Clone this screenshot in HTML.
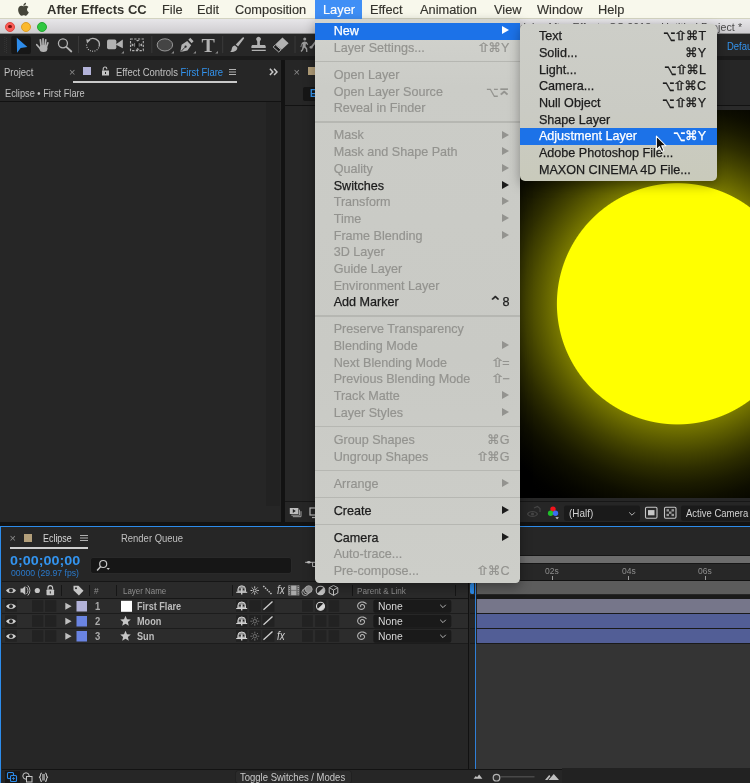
<!DOCTYPE html>
<html lang="en"><head><meta charset="utf-8"><title>After Effects CC - Layer menu</title>
<style>
*{box-sizing:border-box;margin:0;padding:0}
html,body{width:750px;height:783px;overflow:hidden;background:#121212}
body{position:relative;will-change:transform;font-family:"Liberation Sans","DejaVu Sans",sans-serif;font-size:11px;color:#b4b4b4;-webkit-font-smoothing:antialiased}
.a{position:absolute}
i{font-style:normal}
.t{position:absolute;white-space:nowrap;line-height:14px;height:14px;transform-origin:0 50%;transform:scaleX(.86);color:#c0c0c0;font-size:11px}
.bl{color:#3394ef}
#menubar{left:0;top:0;width:750px;height:19.3px;background:#f8f8ec;border-bottom:1px solid #d3d3c0}
#menubar span{position:absolute;top:0;line-height:19.3px;font-size:12.8px;color:#34332d;white-space:nowrap;-webkit-text-stroke:.15px currentColor}
#titlebar{left:0;top:19.3px;width:750px;height:14.6px;background:linear-gradient(#e7e6e9,#cfcdd0);border-bottom:.6px solid #8c8c8c}
.tl{position:absolute;width:10px;height:10px;border-radius:50%;top:2.3px}
#toolbar{left:0;top:33.9px;width:750px;height:21.8px;background:#272727}
.vs{position:absolute;top:3px;width:1px;height:16px;background:#1c1c1c}
.panel{position:absolute;background:#262626}
.menu{position:absolute;background:linear-gradient(#d2d3ce 0,#cbccc7 12%,#c9cac5 60%,#cdcec9 100%);font-size:12.6px;color:#1c1c1c;-webkit-text-stroke:.25px currentColor;box-shadow:0 4px 12px rgba(0,0,0,.35)}
.mi{position:absolute;left:0;right:0;height:16.68px;line-height:16.68px;white-space:nowrap}
.mi.dis{color:#93938f;-webkit-text-stroke:.18px currentColor}
.mi.sel{background:#1c72e8;color:#fff}
.ml{position:absolute;left:18.6px;top:.3px}
.sc{position:absolute;right:10.3px;top:.3px;letter-spacing:0}
#sm .sc{right:11px}
.k{font-family:"DejaVu Sans",sans-serif;font-size:12.5px;display:inline-block;text-align:center;line-height:16px;vertical-align:top}
.kl{display:inline-block}
.k21e7{transform:scaleX(1.45)}
.k2325{transform:scale(.86,1.15);margin:0 -1px}
.k2303{transform:scale(1.35,1.2) translateY(.5px);margin:0 1.800px 0 0}
.k2305{transform:scale(1.4,1.3) translateY(-1.6px);margin:0 -.4px 0 .6px}
.ar{position:absolute;right:10.6px;top:3.5px;width:0;height:0;border-left:7.500px solid currentColor;border-top:4.300px solid transparent;border-bottom:4.300px solid transparent}
.sep{position:absolute;left:0;right:0;height:1.3px;background:#b6b7b2}
.dd{position:absolute;background:#1a1a1a;border-radius:2px}
.box{position:absolute;width:11px;height:13px;background:#1b1b1b}
</style></head><body>

<!-- ===== mac menu bar ===== -->
<div id="menubar" class="a">
<svg class="a" style="left:16.5px;top:2.3px" width="13" height="15" viewBox="0 0 170 200"><path fill="#45453a" d="M150.4 68.2c-1 .8-18.700 10.800-18.700 33 0 25.700 22.600 34.800 23.300 35-.1.600-3.600 12.500-11.900 24.600-7.400 10.700-15.200 21.300-27 21.300s-14.800-6.900-28.500-6.900c-13.300 0-18 7.100-28.800 7.100s-18.300-9.900-27-22C21.600 145.900 13.500 123.600 13.500 102.400c0-34 22.100-52 43.900-52 11.600 0 21.200 7.600 28.500 7.600 6.900 0 17.700-8.100 30.900-8.100 5 0 23 .5 33.600 18.300zM109.400 36.500c5.500-6.500 9.300-15.500 9.300-24.500 0-1.200-.1-2.500-.3-3.500-8.900.3-19.400 5.900-25.800 13.300-5 5.700-9.700 14.700-9.700 23.800 0 1.400.2 2.700.3 3.200.6.1 1.500.2 2.400.2 8 0 18-5.300 23.800-12.500z"/></svg>
<span style="left:47px;font-weight:700;font-size:13px;-webkit-text-stroke:0">After Effects CC</span>
<span style="left:162px">File</span>
<span style="left:197px">Edit</span>
<span style="left:235px">Composition</span>
<div class="a" style="left:315px;top:0;width:47px;height:19.5px;background:#3f8ff6"></div>
<span style="left:323px;color:#fff">Layer</span>
<span style="left:370px">Effect</span>
<span style="left:420px">Animation</span>
<span style="left:494px">View</span>
<span style="left:537px">Window</span>
<span style="left:598px">Help</span>
</div>

<!-- ===== window title bar ===== -->
<div id="titlebar" class="a">
<div class="tl" style="left:5px;background:#fc5b57;border:.5px solid #dd4640"></div>
<div class="a" style="left:8.300px;top:5.5px;width:3.4px;height:3.4px;border-radius:50%;background:#7a1512"></div>
<div class="tl" style="left:21px;background:#fbb92e;border:.5px solid #dc9d27"></div>
<div class="tl" style="left:37px;background:#30c841;border:.5px solid #24a732"></div>
<div class="a" style="right:7.8px;top:1.2px;line-height:15px;font-size:10.6px;letter-spacing:.12px;color:#4a4a4a;white-space:nowrap">Adobe After Effects CC 2018 - Untitled Project *</div>
</div>

<!-- ===== AE toolbar ===== -->
<div id="toolbar" class="a">
<svg class="a" style="left:0;top:0" width="320" height="21.4" viewBox="0 33.9 320 21.4">
<g fill="#3a3a3a"><rect x="4.300" y="37" width=".9" height="1"/><rect x="5.900" y="38" width=".9" height="1"/><rect x="4.300" y="39" width=".9" height="1"/><rect x="5.900" y="40" width=".9" height="1"/><rect x="4.300" y="41" width=".9" height="1"/><rect x="5.900" y="42" width=".9" height="1"/><rect x="4.300" y="43" width=".9" height="1"/><rect x="5.900" y="44" width=".9" height="1"/><rect x="4.300" y="45" width=".9" height="1"/><rect x="5.900" y="46" width=".9" height="1"/><rect x="4.300" y="47" width=".9" height="1"/><rect x="5.900" y="48" width=".9" height="1"/><rect x="4.300" y="49" width=".9" height="1"/><rect x="5.900" y="50" width=".9" height="1"/><rect x="4.300" y="51" width=".9" height="1"/><rect x="5.900" y="52" width=".9" height="1"/></g>
<rect x="11.200" y="35.700" width="19.700" height="18.300" rx="2.200" fill="#171717"/>
<path d="M16.700 37.700L27.300 46.900L20.600 47.900L17 52.700Z" fill="#2d8ceb"/>
<!-- hand -->
<g stroke="#b2b2b2" stroke-width="1.700" stroke-linecap="round" fill="none"><path d="M47.800 42.800l-1.600 4.600M45.700 39.700l-.9 6.500M43 38.800v7.200M40.300 39.800l.8 6.400M36.700 44.600l3.500 4"/></g><ellipse cx="43.400" cy="48.300" rx="4" ry="3.500" fill="#b2b2b2"/>
<!-- magnifier -->
<circle cx="62.900" cy="43.200" r="4.500" fill="none" stroke="#b2b2b2" stroke-width="1.300"/><path d="M66.300 46.700l5 4.700" stroke="#b2b2b2" stroke-width="1.800" stroke-linecap="round"/>
<rect x="78" y="36" width="1" height="17" fill="#3a3a3a"/>
<!-- rotate -->
<path d="M88 40.700A6.400 6.400 0 0 1 99.100 46.500" fill="none" stroke="#b2b2b2" stroke-width="1.300"/><path d="M98.700 47.500A6.400 6.400 0 0 1 86.600 43.700" fill="none" stroke="#b2b2b2" stroke-width="1.200" stroke-dasharray="1 1.300"/><path d="M86.200 39.200l4.300.8-3.500 3.400z" fill="#b2b2b2"/>
<!-- camera -->
<rect x="107" y="39.500" width="9.300" height="9.600" rx="1.600" fill="#b2b2b2"/><path d="M115.500 44.300l7.300-4.800v8.600z" fill="#b2b2b2"/><path d="M124 50.800v2.600h-2.800z" fill="#8a8a8a"/>
<!-- pan behind -->
<rect x="130.500" y="38.900" width="12.800" height="11.600" fill="none" stroke="#b2b2b2" stroke-width="1.100" stroke-dasharray="2.300 1.400"/><rect x="135.400" y="42.500" width="4.600" height="4.600" fill="#171717"/><path d="M131.700 43.200l2.300 1.600-2.300 1.600zM142.100 43.200l-2.300 1.600 2.300 1.600zM135.900 39.800l1.800 1.700 1.800-1.700zM135.900 49.700l1.800-1.700 1.800 1.700z" fill="#b2b2b2"/><path d="M134.600 43v3.600M139.200 43v3.600" stroke="#b2b2b2" stroke-width=".7"/>
<rect x="151.300" y="36" width="1" height="17" fill="#3a3a3a"/>
<!-- ellipse -->
<ellipse cx="164.900" cy="44.800" rx="7.700" ry="6.100" fill="#444" stroke="#999" stroke-width="1"/><path d="M174 50.800v2.600h-2.800z" fill="#8a8a8a"/>
<!-- pen -->
<path d="M180.300 52l1.300-7.300 5.600-3.800 4 4.200-3.700 5.400zM188.300 39.600l2-1.900 3.300 3.400-1.900 2z" fill="#b2b2b2"/><path d="M180.800 51.600l4.300-4.500" stroke="#272727" stroke-width=".9"/><circle cx="185.600" cy="46.600" r="1.100" fill="#272727"/><path d="M196 50.800v2.600h-2.800z" fill="#8a8a8a"/>
<path d="M218 50.800v2.600h-2.800z" fill="#8a8a8a"/>
<rect x="222.200" y="36" width="1" height="17" fill="#3a3a3a"/>
<!-- brush -->
<path d="M243.800 37.300c.6.400.4 1-.1 1.700l-5.600 7.300-2.300-1.800 6.300-6.700c.6-.6 1.100-.9 1.700-.5zM235 45.400l2.300 1.900c.5 2.400-2.600 5-7.300 4.600 1.800-1 1.500-2.300 2-4 .4-1.500 1.600-2.400 3-2.500z" fill="#b2b2b2"/>
<!-- stamp -->
<path d="M256.800 40.500a2.300 2.300 0 1 1 3.600 0c-.6.800-.6 1.400-.4 4.300h4c1.200 0 1.800.6 1.800 1.700v1.500h-14.400v-1.500c0-1.100.6-1.700 1.800-1.700h4c.2-2.900.2-3.500-.4-4.300zM251.800 49.600h14v1.400h-14z" fill="#b2b2b2"/>
<!-- eraser -->
<path d="M282.500 37.500l6.200 5.600-7 6.600-6.200-5.600z" fill="#b2b2b2"/><path d="M275.500 44.700l5.600 5-2.300 2.200-5.600-5z" fill="#1d1d1d" stroke="#b2b2b2" stroke-width="1"/>
<rect x="294.600" y="36" width="1" height="17" fill="#3a3a3a"/>
<!-- puppet -->
<g fill="#9a9a9a"><circle cx="304.800" cy="38.900" r="1.500"/><path d="M302 42.600l2.400-1.300 2.400.5 1.500 2.600-.9.500-1.400-1.600-.4 2.900 1.700 2.100.2 3.500h-1.300l-.3-2.900-1.800-1.500-.9 2.500-1.700 1.900-.9-.8 1.500-1.800.8-5.200-1.200.7-.2 2h-1.100z"/><path d="M315.500 40.500l-3.800 5-2 .8c-.6 1.600.6 2.600 2.600 2l.9-1.900 3.500-4.500z"/></g>
</svg>
<div class="a" style="left:202.400px;top:2px;font-family:'Liberation Serif',serif;font-weight:700;font-size:18.500px;line-height:20px;color:#b2b2b2;transform-origin:50% 50%;transform:scaleX(1.08)">T</div>

<div class="a bl" style="left:727.4px;top:1.3px;line-height:22px;font-size:10.5px;white-space:nowrap;transform-origin:0 50%;transform:scaleX(.9)">Default</div>
</div>

<div class="a" style="left:0;top:55.700px;width:750px;height:3.900px;background:#1b1b1b"></div>
<!-- ===== Project / Effect Controls panel ===== -->
<div class="panel" style="left:0;top:59.6px;width:281.3px;height:462.8px">
<div class="t" style="left:4px;top:5.4px">Project</div>
<div class="t" style="left:69px;top:5.4px;color:#8a8a8a;transform:none">×</div>
<div class="a" style="left:82.7px;top:7.2px;width:8.6px;height:8.6px;background:#b3b3d9"></div>
<svg class="a" style="left:100.5px;top:6.5px" width="9" height="10" viewBox="0 0 9 10"><path d="M1 4.500h7v5h-7z" fill="#c4c4c4"/><path d="M2.200 4.500v-1.700a1.800 1.800 0 0 1 3.600 0v.4" fill="none" stroke="#c4c4c4" stroke-width="1.100"/><rect x="4" y="6" width="1" height="2" fill="#232323"/></svg>
<div class="t" style="left:116px;top:5.4px">Effect Controls <span class="bl">First Flare</span></div>
<div class="a" style="left:228.500px;top:9px;width:7.500px;height:1px;background:#b0b0b0;box-shadow:0 2.500px 0 #b0b0b0,0 5px 0 #b0b0b0"></div>
<div class="a" style="left:72.500px;top:21.200px;width:164.300px;height:1.800px;background:#c9c9c9"></div>
<svg class="a" style="left:268.800px;top:8.200px" width="9.600" height="7.800" viewBox="0 0 11 9"><path d="M1 .8l3.400 3.700-3.400 3.700M5.800 .8l3.400 3.700-3.400 3.700" fill="none" stroke="#c9c9c9" stroke-width="1.700"/></svg>
<div class="t" style="left:5px;top:26.400px;transform:scaleX(.84)">Eclipse • First Flare</div>
<div class="a" style="left:0;top:41.400px;width:281.300px;height:1.200px;background:#121212"></div>
<div class="a" style="left:265.600px;top:42.600px;width:14.800px;height:404.200px;background:#222"></div>
</div>

<!-- ===== Composition panel ===== -->
<div class="panel" style="left:285px;top:59.6px;width:465px;height:462.8px">
<div class="t" style="left:8.500px;top:5.400px;color:#8a8a8a;transform:none">×</div>
<div class="a" style="left:23px;top:7.200px;width:9px;height:8.600px;background:#b39f7a"></div>
<div class="a" style="left:18px;top:27.600px;width:60px;height:13.800px;background:#161616;border-radius:2px"></div>
<div class="t bl" style="left:25px;top:27.700px;font-size:10.400px;font-weight:700;transform:scaleX(.9)">Eclipse</div>
<div class="a" style="left:0;top:45px;width:465px;height:1.200px;background:#121212"></div>
<!-- viewer -->
<div class="a" style="left:30px;top:46.400px;width:435px;height:4.400px;background:#2a2a2a"></div>
<div class="a" style="left:30px;top:50.800px;width:435px;height:387.400px;background:#000;overflow:hidden">
<div class="a" style="left:0;top:0;width:435px;height:387.400px;background:radial-gradient(circle at 362.5px 193.8px,#ffff00 0,#ffff00 120.1px,#797900 121.1px,#747400 123px,#5e5e00 135px,#444400 150px,#2d2d00 165px,#1b1b00 180px,#0e0e00 195px,#060600 210px,#010100 225px,#000 235px)"></div>
</div>
<div class="a" style="left:0;top:441.400px;width:465px;height:1.100px;background:#171717"></div>
<!-- viewer footer -->
<svg class="a" style="left:0;top:443.600px" width="465" height="20" viewBox="285 502.500 465 20">
<!-- snapshot stack -->
<path d="M299.500 509.200v5.500h-8.200M301 510.700v5.500h-8.200" fill="none" stroke="#a0a0a0" stroke-width="1"/><rect x="289.800" y="507.500" width="8.600" height="6" fill="#bdbdbd"/><path d="M292.800 508.600l3 1.900-3 1.900z" fill="#232323"/>
<rect x="310" y="507.500" width="9" height="7" fill="none" stroke="#bdbdbd" stroke-width="1.200"/><path d="M312 517h6" stroke="#bdbdbd" stroke-width="1.200"/>
<!-- greyed eye -->
<path d="M527.500 513.500c2-3.300 8-3.300 10 0-2 3.300-8 3.300-10 0z" fill="none" stroke="#454545" stroke-width="1.100"/><circle cx="532.500" cy="513.500" r="1.600" fill="#454545"/><path d="M534 507.500l3.500-1.500 2.500 2v3.500" fill="none" stroke="#454545" stroke-width="1.100"/>
<!-- rgb -->
<circle cx="553" cy="508.600" r="2.700" fill="#f2131b"/><circle cx="550.600" cy="512.700" r="2.700" fill="#1fc02a"/><circle cx="555.500" cy="512.700" r="2.700" fill="#3c6cf0"/><path d="M555.300 516.800h3.600l-1.800 1.900z" fill="#cfcfcf"/>
<rect x="564" y="505" width="76" height="15.300" rx="2" fill="#1a1a1a"/>
<path d="M629.200 511.900l2.800 2.800 2.800-2.800" fill="none" stroke="#b4b4b4" stroke-width="1"/>
<rect x="645.500" y="506.700" width="11.500" height="11" rx="1.200" fill="none" stroke="#c6c6c6" stroke-width="1.100"/><rect x="648" y="509.600" width="6.500" height="5.200" fill="#c6c6c6"/>
<rect x="664.500" y="506.700" width="11.500" height="11" rx="1.200" fill="none" stroke="#c6c6c6" stroke-width="1.100"/><g fill="#9a9a9a"><rect x="666.500" y="508.700" width="2.500" height="2.300"/><rect x="671.500" y="508.700" width="2.500" height="2.300"/><rect x="669" y="511" width="2.500" height="2.300"/><rect x="666.500" y="513.300" width="2.500" height="2.300"/><rect x="671.500" y="513.300" width="2.500" height="2.300"/></g>
<rect x="681" y="505" width="80" height="15.300" rx="2" fill="#1a1a1a"/>
</svg>
<div class="t" style="left:284px;top:446.600px;color:#d2d2d2;font-size:11.500px;transform:scaleX(.86)">(Half)</div>
<div class="t" style="left:401px;top:446.600px;color:#d2d2d2;font-size:11.500px;transform:scaleX(.825)">Active Camera</div>

</div>

<!-- ===== Timeline panel ===== -->
<div class="a" style="left:0;top:0;width:750px;height:783px">
<div class="a" style="left:0;top:525.6px;width:750px;height:257.400px;background:#262626;border-top:1.600px solid #2d8ceb;border-left:1.800px solid #2d8ceb"></div>
<div class="t" style="left:9.500px;top:531px;color:#8a8a8a;transform:none">×</div>
<div class="a" style="left:23.500px;top:533.600px;width:8.600px;height:8.300px;background:#b39f7a"></div>
<div class="t" style="left:42.500px;top:531.300px;color:#d6d6d6;transform:scaleX(.81)">Eclipse</div>
<div class="a" style="left:80px;top:535.300px;width:7.500px;height:1px;background:#b0b0b0;box-shadow:0 2.500px 0 #b0b0b0,0 5px 0 #b0b0b0"></div>
<div class="a" style="left:10.400px;top:547px;width:77.400px;height:1.800px;background:#cfcfcf"></div>
<div class="t" style="left:120.500px;top:531.300px">Render Queue</div>
<div class="a bl" style="left:10.200px;top:553.800px;font-size:12.600px;font-weight:700;line-height:15px;white-space:nowrap;transform-origin:0 50%;transform:scaleX(1.14)">0;00;00;00</div>
<div class="a" style="left:11px;top:568.300px;font-size:8.800px;line-height:10px;color:#2a7acc;white-space:nowrap;transform-origin:0 50%;transform:scaleX(.985)">00000 (29.97 fps)</div>
<div class="a" style="left:91px;top:557.800px;width:200px;height:15.200px;background:#161616;border-radius:2px;box-shadow:0 0 0 .6px #2c2c2c"></div>
<svg class="a" style="left:95px;top:558.500px" width="18" height="14" viewBox="0 0 18 14"><circle cx="8.200" cy="5" r="3.500" fill="none" stroke="#c6c6c6" stroke-width="1.200"/><path d="M5.700 7.600l-3.600 3.800" stroke="#c6c6c6" stroke-width="1.500"/><path d="M11.500 9h3.400l-1.700 1.900z" fill="#c6c6c6"/></svg>
<svg class="a" style="left:303px;top:557px" width="14" height="12" viewBox="303 557 14 12"><path d="M305.200 562.300h10" stroke="#c0c0c0" stroke-width="1"/><ellipse cx="308.800" cy="562.300" rx="1.800" ry="1.300" fill="#c0c0c0"/><path d="M312.600 562.500v4h3.500" fill="none" stroke="#c0c0c0" stroke-width="1"/></svg>
<div class="a" style="left:1.800px;top:581.300px;width:466.400px;height:17.500px;background:#2a2a2a;border-top:1px solid #161616;border-bottom:1px solid #161616"></div>
<svg class="a" style="left:0;top:582px" width="470" height="16" viewBox="0 582 470 16">
<path d="M6 590.500c2-3.400 8-3.400 10 0-2 3.400-8 3.400-10 0z" fill="#c6c6c6"/><circle cx="11" cy="590.500" r="1.900" fill="#2a2a2a"/>
<path d="M20.500 588.600h2l2.800-2.600v9l-2.800-2.600h-2z" fill="#c6c6c6"/><path d="M26.500 587a5 5 0 0 1 0 7M27.800 585.500a7 7 0 0 1 0 10" fill="none" stroke="#c6c6c6" stroke-width=".9"/>
<circle cx="37.300" cy="590.500" r="2.600" fill="#c6c6c6"/>
<rect x="46.500" y="589.500" width="7.600" height="5.800" rx=".8" fill="#c6c6c6"/><path d="M48 589.500v-1.600a2.300 2.300 0 0 1 4.600 0v1.600" fill="none" stroke="#c6c6c6" stroke-width="1.200"/><rect x="49.800" y="591.300" width="1" height="2.200" fill="#2a2a2a"/>
<rect x="61" y="585" width="1" height="11" fill="#161616"/>
<path d="M73.500 585.800h5l5 5-4.600 4.600-5.400-5.200z" fill="#c6c6c6"/><circle cx="76" cy="588.300" r="1" fill="#2a2a2a"/>
<rect x="89" y="585" width="1" height="11" fill="#161616"/>
<rect x="116" y="585" width="1" height="11" fill="#161616"/>
<rect x="232" y="585" width="1" height="11" fill="#161616"/>
<!-- shy -->
<g transform="translate(241.700 591.800)"><path d="M-3.800 0v-2.600a3.800 3.400 0 0 1 7.600 0v2.600z" fill="#8c8c8c" stroke="#c6c6c6" stroke-width="1"/><rect x="-2.500" y="-3.300" width="1.500" height="1.700" fill="#2a2a2a"/><rect x="1" y="-3.300" width="1.500" height="1.700" fill="#2a2a2a"/><path d="M-5.500 .5h11" stroke="#c6c6c6" stroke-width="1.100"/><path d="M0 -3.600v6.200" stroke="#c6c6c6" stroke-width="1.400"/></g>
<!-- sun -->
<circle cx="254.700" cy="590.500" r="1.500" fill="none" stroke="#c6c6c6" stroke-width="1"/><path d="M254.700 586.300v1.700M254.700 593v1.700M250.500 590.500h1.700M257.200 590.500h1.700M251.700 587.500l1.200 1.200M256.500 592.300l1.200 1.200M257.700 587.500l-1.200 1.200M252.900 592.300l-1.200 1.200" stroke="#c6c6c6" stroke-width="1"/>
<path d="M263.300 586l8.400 8.300" stroke="#c6c6c6" stroke-width="1.500" stroke-dasharray="1.500 1"/>
<!-- film -->
<rect x="288.300" y="585.400" width="11" height="10" fill="#a9a9a9"/><path d="M290.600 585.400v10M297 585.400v10" stroke="#2a2a2a" stroke-width=".7"/><path d="M289.400 586v9M298.200 586v9" stroke="#2a2a2a" stroke-width=".9" stroke-dasharray="1 1.100"/><path d="M291 590.400h6" stroke="#6a6a6a" stroke-width=".8"/>
<!-- motion blur -->
<circle cx="305.200" cy="592.200" r="3.300" fill="#2a2a2a" stroke="#a0a0a0" stroke-width="1"/><circle cx="306.900" cy="590.700" r="3.300" fill="#2a2a2a" stroke="#a8a8a8" stroke-width="1"/><circle cx="308.700" cy="589.200" r="3.500" fill="#8c8c8c" stroke="#b0b0b0" stroke-width=".8"/>
<!-- adjustment -->
<circle cx="320.500" cy="590.500" r="4.300" fill="none" stroke="#c6c6c6" stroke-width="1.100"/><path d="M317.400 593.600a4.300 4.300 0 0 0 6.100-6.100z" fill="#c6c6c6"/>
<!-- cube -->
<path d="M333.500 585.500l4.300 2.200v5.200l-4.300 2.400-4.300-2.400v-5.200zM329.200 587.700l4.300 2.300 4.300-2.300M333.500 590v5.300" fill="none" stroke="#c6c6c6" stroke-width="1"/>
<rect x="352" y="585" width="1" height="11" fill="#161616"/>
<rect x="455" y="585" width="1" height="11" fill="#161616"/>
</svg>
<div class="t" style="left:94px;top:583.500px;font-size:9.700px;color:#8e8e8e">#</div>
<div class="t" style="left:122.500px;top:583.500px;font-size:9.700px;color:#8e8e8e;transform:scaleX(.82)">Layer Name</div>
<div class="t" style="left:276.500px;top:583px;font-size:12.500px;color:#c6c6c6;font-style:italic;transform:scaleX(.8)">fx</div>
<div class="t" style="left:357px;top:583.500px;font-size:9.700px;color:#8e8e8e;transform:scaleX(.84)">Parent &amp; Link</div>
<div class="a" style="left:1.800px;top:598.6px;width:466.200px;height:14.400px;background:#2c2c2c"></div>
<div class="a" style="left:1.800px;top:612.8px;width:466.400px;height:1px;background:#1c1c1c"></div>
<svg class="a" style="left:0;top:598.8px" width="470" height="15" viewBox="0 0 470 15"><rect x="5" y="1.200" width="11.800" height="11.600" fill="#232323"/><path d="M6 7.200c2-3.400 8-3.400 10 0-2 3.400-8 3.400-10 0z" fill="#d0d0d0"/><circle cx="11" cy="7.200" r="1.900" fill="#232323"/><rect x="32" y="1.200" width="11.300" height="11.600" fill="#222"/><rect x="45" y="1.200" width="11.300" height="11.600" fill="#222"/><path d="M65.300 3.700l6.300 3.500-6.300 3.500z" fill="#c0c0c0"/><rect x="76.500" y="2" width="10.500" height="10.500" fill="#b3b3d9"/><rect x="121" y="1.800" width="11" height="11" fill="#fff"/><rect x="236" y="1.200" width="11.200" height="11.600" fill="#222"/><g transform="translate(241.700 9)"><path d="M-3.800 0v-2.600a3.800 3.400 0 0 1 7.600 0v2.600z" fill="#909090" stroke="#d0d0d0" stroke-width="1"/><rect x="-2.500" y="-3.300" width="1.500" height="1.700" fill="#222"/><rect x="1" y="-3.300" width="1.500" height="1.700" fill="#222"/><path d="M-5.500 .5h11" stroke="#d0d0d0" stroke-width="1.100"/><path d="M0 -3.600v6.200" stroke="#d0d0d0" stroke-width="1.400"/></g><rect x="249.300" y="1.200" width="11.500" height="11.600" fill="#222"/><rect x="262.400" y="1.200" width="12" height="11.600" fill="#222"/><path d="M263.500 10.800l9-8.200" stroke="#d0d0d0" stroke-width="1.300"/><rect x="302" y="1.200" width="10.800" height="11.600" fill="#222"/><rect x="315.200" y="1.200" width="11.200" height="11.600" fill="#222"/><rect x="328.500" y="1.200" width="10.700" height="11.600" fill="#222"/><circle cx="320.500" cy="7.200" r="4" fill="none" stroke="#d6d6d6" stroke-width="1.100"/><path d="M317.600 10.100a4 4 0 0 0 5.700-5.700z" fill="#d6d6d6"/><path d="M366.14 4.62 L365.36 3.96 L364.45 3.46 L363.47 3.14 L362.45 3.01 L361.44 3.07 L360.48 3.30 L359.62 3.70 L358.89 4.24 L358.31 4.88 L357.91 5.60 L357.69 6.36 L357.65 7.13 L357.79 7.87 L358.10 8.56 L358.55 9.15 L359.12 9.64 L359.78 10.00 L360.49 10.23 L361.22 10.33 L361.93 10.28 L362.60 10.11 L363.20 9.83 L363.71 9.46 L364.10 9.01 L364.36 8.52 L364.50 8.01 L364.51 7.50 L364.41 7.01 L364.19 6.57 L363.89 6.20 L363.52 5.90 L363.10 5.69 L362.66 5.56 L362.21 5.53 L361.79 5.58 L361.41 5.70 L361.08 5.88 L360.82 6.11 L360.63 6.37 L360.52 6.64 L360.49 6.91 L360.52 7.17 L360.61 7.39 L360.75 7.58" fill="none" stroke="#b4b4b4" stroke-width="1.100" stroke-linecap="round"/><rect x="373.300" y=".8" width="78" height="13" rx="2" fill="#1a1a1a"/><path d="M440.200 5.800l2.800 2.800 2.800-2.800" fill="none" stroke="#b4b4b4" stroke-width="1"/></svg>
<div class="t" style="left:94.500px;top:599.0px;font-weight:700;color:#ababab">1</div>
<div class="t" style="left:136.800px;top:599.0px;font-weight:700;color:#bdbdbd;font-size:11.200px;transform:scaleX(.815)">First Flare</div>
<div class="t" style="left:378px;top:599.0px;color:#d6d6d6;font-size:11.500px;transform:scaleX(.9)">None</div>
<div class="a" style="left:1.800px;top:613.6px;width:466.200px;height:14.400px;background:#2c2c2c"></div>
<div class="a" style="left:1.800px;top:627.8px;width:466.400px;height:1px;background:#1c1c1c"></div>
<svg class="a" style="left:0;top:613.8px" width="470" height="15" viewBox="0 0 470 15"><rect x="5" y="1.200" width="11.800" height="11.600" fill="#232323"/><path d="M6 7.200c2-3.400 8-3.400 10 0-2 3.400-8 3.400-10 0z" fill="#d0d0d0"/><circle cx="11" cy="7.200" r="1.900" fill="#232323"/><rect x="32" y="1.200" width="11.300" height="11.600" fill="#222"/><rect x="45" y="1.200" width="11.300" height="11.600" fill="#222"/><path d="M65.300 3.700l6.300 3.500-6.300 3.500z" fill="#c0c0c0"/><rect x="76.500" y="2" width="10.500" height="10.500" fill="#6a84e2"/><path d="M125.500 1.800l1.500 3.500 3.800.3-2.900 2.500.9 3.700-3.300-2-3.300 2 .9-3.700-2.900-2.500 3.800-.3z" fill="#c6c6c6"/><rect x="236" y="1.200" width="11.200" height="11.600" fill="#222"/><g transform="translate(241.700 9)"><path d="M-3.800 0v-2.600a3.800 3.400 0 0 1 7.600 0v2.600z" fill="#909090" stroke="#d0d0d0" stroke-width="1"/><rect x="-2.500" y="-3.300" width="1.500" height="1.700" fill="#222"/><rect x="1" y="-3.300" width="1.500" height="1.700" fill="#222"/><path d="M-5.500 .5h11" stroke="#d0d0d0" stroke-width="1.100"/><path d="M0 -3.600v6.200" stroke="#d0d0d0" stroke-width="1.400"/></g><rect x="249.300" y="1.200" width="11.500" height="11.600" fill="#222"/><rect x="262.400" y="1.200" width="12" height="11.600" fill="#222"/><circle cx="254.800" cy="7.200" r="1.700" fill="none" stroke="#777" stroke-width=".9"/><path d="M254.800 2.700v1.800M254.800 9.900v1.800M250.300 7.200h1.800M257.500 7.200h1.800M251.600 4l1.300 1.300M256.700 9.100l1.300 1.300M258 4l-1.300 1.300M252.900 9.100l-1.300 1.300" stroke="#777" stroke-width=".9"/><path d="M263.500 10.800l9-8.200" stroke="#d0d0d0" stroke-width="1.300"/><rect x="302" y="1.200" width="10.800" height="11.600" fill="#222"/><rect x="315.200" y="1.200" width="11.200" height="11.600" fill="#222"/><rect x="328.500" y="1.200" width="10.700" height="11.600" fill="#222"/><path d="M366.14 4.62 L365.36 3.96 L364.45 3.46 L363.47 3.14 L362.45 3.01 L361.44 3.07 L360.48 3.30 L359.62 3.70 L358.89 4.24 L358.31 4.88 L357.91 5.60 L357.69 6.36 L357.65 7.13 L357.79 7.87 L358.10 8.56 L358.55 9.15 L359.12 9.64 L359.78 10.00 L360.49 10.23 L361.22 10.33 L361.93 10.28 L362.60 10.11 L363.20 9.83 L363.71 9.46 L364.10 9.01 L364.36 8.52 L364.50 8.01 L364.51 7.50 L364.41 7.01 L364.19 6.57 L363.89 6.20 L363.52 5.90 L363.10 5.69 L362.66 5.56 L362.21 5.53 L361.79 5.58 L361.41 5.70 L361.08 5.88 L360.82 6.11 L360.63 6.37 L360.52 6.64 L360.49 6.91 L360.52 7.17 L360.61 7.39 L360.75 7.58" fill="none" stroke="#b4b4b4" stroke-width="1.100" stroke-linecap="round"/><rect x="373.300" y=".8" width="78" height="13" rx="2" fill="#1a1a1a"/><path d="M440.200 5.800l2.800 2.800 2.800-2.800" fill="none" stroke="#b4b4b4" stroke-width="1"/></svg>
<div class="t" style="left:94.500px;top:614.0px;font-weight:700;color:#ababab">2</div>
<div class="t" style="left:136.800px;top:614.0px;font-weight:700;color:#bdbdbd;font-size:11.200px;transform:scaleX(.815)">Moon</div>
<div class="t" style="left:378px;top:614.0px;color:#d6d6d6;font-size:11.500px;transform:scaleX(.9)">None</div>
<div class="a" style="left:1.800px;top:628.6px;width:466.200px;height:14.400px;background:#2c2c2c"></div>
<div class="a" style="left:1.800px;top:642.8px;width:466.400px;height:1px;background:#1c1c1c"></div>
<svg class="a" style="left:0;top:628.8px" width="470" height="15" viewBox="0 0 470 15"><rect x="5" y="1.200" width="11.800" height="11.600" fill="#232323"/><path d="M6 7.200c2-3.400 8-3.400 10 0-2 3.400-8 3.400-10 0z" fill="#d0d0d0"/><circle cx="11" cy="7.200" r="1.900" fill="#232323"/><rect x="32" y="1.200" width="11.300" height="11.600" fill="#222"/><rect x="45" y="1.200" width="11.300" height="11.600" fill="#222"/><path d="M65.300 3.700l6.300 3.500-6.300 3.500z" fill="#c0c0c0"/><rect x="76.500" y="2" width="10.500" height="10.500" fill="#6a84e2"/><path d="M125.500 1.800l1.500 3.500 3.800.3-2.900 2.500.9 3.700-3.300-2-3.300 2 .9-3.700-2.900-2.500 3.800-.3z" fill="#c6c6c6"/><rect x="236" y="1.200" width="11.200" height="11.600" fill="#222"/><g transform="translate(241.700 9)"><path d="M-3.800 0v-2.600a3.800 3.400 0 0 1 7.600 0v2.600z" fill="#909090" stroke="#d0d0d0" stroke-width="1"/><rect x="-2.500" y="-3.300" width="1.500" height="1.700" fill="#222"/><rect x="1" y="-3.300" width="1.500" height="1.700" fill="#222"/><path d="M-5.500 .5h11" stroke="#d0d0d0" stroke-width="1.100"/><path d="M0 -3.600v6.200" stroke="#d0d0d0" stroke-width="1.400"/></g><rect x="249.300" y="1.200" width="11.500" height="11.600" fill="#222"/><rect x="262.400" y="1.200" width="12" height="11.600" fill="#222"/><circle cx="254.800" cy="7.200" r="1.700" fill="none" stroke="#777" stroke-width=".9"/><path d="M254.800 2.700v1.800M254.800 9.900v1.800M250.300 7.200h1.800M257.500 7.200h1.800M251.600 4l1.300 1.300M256.700 9.100l1.300 1.300M258 4l-1.300 1.300M252.900 9.100l-1.300 1.300" stroke="#777" stroke-width=".9"/><path d="M263.500 10.800l9-8.200" stroke="#d0d0d0" stroke-width="1.300"/><rect x="302" y="1.200" width="10.800" height="11.600" fill="#222"/><rect x="315.200" y="1.200" width="11.200" height="11.600" fill="#222"/><rect x="328.500" y="1.200" width="10.700" height="11.600" fill="#222"/><path d="M366.14 4.62 L365.36 3.96 L364.45 3.46 L363.47 3.14 L362.45 3.01 L361.44 3.07 L360.48 3.30 L359.62 3.70 L358.89 4.24 L358.31 4.88 L357.91 5.60 L357.69 6.36 L357.65 7.13 L357.79 7.87 L358.10 8.56 L358.55 9.15 L359.12 9.64 L359.78 10.00 L360.49 10.23 L361.22 10.33 L361.93 10.28 L362.60 10.11 L363.20 9.83 L363.71 9.46 L364.10 9.01 L364.36 8.52 L364.50 8.01 L364.51 7.50 L364.41 7.01 L364.19 6.57 L363.89 6.20 L363.52 5.90 L363.10 5.69 L362.66 5.56 L362.21 5.53 L361.79 5.58 L361.41 5.70 L361.08 5.88 L360.82 6.11 L360.63 6.37 L360.52 6.64 L360.49 6.91 L360.52 7.17 L360.61 7.39 L360.75 7.58" fill="none" stroke="#b4b4b4" stroke-width="1.100" stroke-linecap="round"/><rect x="373.300" y=".8" width="78" height="13" rx="2" fill="#1a1a1a"/><path d="M440.200 5.800l2.800 2.800 2.800-2.800" fill="none" stroke="#b4b4b4" stroke-width="1"/></svg>
<div class="t" style="left:94.500px;top:629.0px;font-weight:700;color:#ababab">3</div>
<div class="t" style="left:136.800px;top:629.0px;font-weight:700;color:#bdbdbd;font-size:11.200px;transform:scaleX(.815)">Sun</div>
<div class="t" style="left:378px;top:629.0px;color:#d6d6d6;font-size:11.500px;transform:scaleX(.9)">None</div>
<div class="t" style="left:276.500px;top:628.5px;font-size:12.500px;color:#d0d0d0;font-style:italic;transform:scaleX(.8)">fx</div>
<div class="a" style="left:468px;top:527.200px;width:1.300px;height:242.300px;background:#111"></div>
<div class="a" style="left:470px;top:555.500px;width:280px;height:8px;background:#262626"></div>
<div class="a" style="left:470px;top:554.700px;width:280px;height:1.100px;background:#161616"></div>
<div class="a" style="left:476px;top:556.200px;width:274px;height:6.800px;background:#6c6c6c"></div>
<div class="a" style="left:470px;top:563.300px;width:280px;height:16.400px;background:#272727;border-top:1px solid #161616"></div>
<div class="t" style="left:545.0px;top:563.500px;font-size:9.700px;color:#8e8e8e;transform:scaleX(.88)">02s</div>
<div class="a" style="left:551.8px;top:576.300px;width:1px;height:3.500px;background:#9c9c9c"></div>
<div class="t" style="left:621.5px;top:563.500px;font-size:9.700px;color:#8e8e8e;transform:scaleX(.88)">04s</div>
<div class="a" style="left:628.3px;top:576.300px;width:1px;height:3.500px;background:#9c9c9c"></div>
<div class="t" style="left:698.0px;top:563.500px;font-size:9.700px;color:#8e8e8e;transform:scaleX(.88)">06s</div>
<div class="a" style="left:704.8px;top:576.300px;width:1px;height:3.500px;background:#9c9c9c"></div>
<div class="a" style="left:470px;top:579.600px;width:280px;height:1.500px;background:#111"></div>
<div class="a" style="left:470px;top:581.100px;width:280px;height:13.400px;background:#262626"></div>
<div class="a" style="left:476.500px;top:581.300px;width:273.500px;height:12.700px;background:#5c5c5c"></div>
<div class="a" style="left:470px;top:594.500px;width:280px;height:4.300px;background:#1a1a1a"></div>
<div class="a" style="left:470px;top:598.800px;width:280px;height:170.700px;background:#343434"></div>
<div class="a" style="left:469.300px;top:598.800px;width:6px;height:170.700px;background:#262626"></div>
<div class="a" style="left:470px;top:598.5px;width:6.500px;height:14.800px;background:#262626"></div>
<div class="a" style="left:476.500px;top:599.2px;width:273.500px;height:13.400px;background:#76768a"></div>
<div class="a" style="left:470px;top:612.8px;width:280px;height:1px;background:#1a1a1a"></div>
<div class="a" style="left:470px;top:613.5px;width:6.500px;height:14.800px;background:#262626"></div>
<div class="a" style="left:476.500px;top:614.2px;width:273.500px;height:13.400px;background:#525e96"></div>
<div class="a" style="left:470px;top:627.8px;width:280px;height:1px;background:#1a1a1a"></div>
<div class="a" style="left:470px;top:628.5px;width:6.500px;height:14.800px;background:#262626"></div>
<div class="a" style="left:476.500px;top:629.2px;width:273.500px;height:13.400px;background:#525e96"></div>
<div class="a" style="left:470px;top:642.8px;width:280px;height:1px;background:#1a1a1a"></div>
<div class="a" style="left:475.100px;top:583.200px;width:1.400px;height:186.300px;background:#2f7fd8"></div>
<div class="a" style="left:470.400px;top:583.200px;width:4px;height:11.300px;background:#2d8ceb;border-radius:2px 1px 1px 2px"></div>
<div class="a" style="left:1.800px;top:769.300px;width:748.200px;height:1.200px;background:#131313"></div>
<div class="a" style="left:1.800px;top:770.500px;width:748.200px;height:12.500px;background:#262626"></div>
<div class="a" style="left:4.500px;top:770.500px;width:15px;height:12.500px;background:#181818"></div>
<svg class="a" style="left:0;top:770.500px" width="60" height="12.500" viewBox="0 770.500 60 12.500">
<rect x="7.500" y="772" width="6" height="6" rx="1" fill="none" stroke="#2d8ceb" stroke-width="1.100"/><rect x="10.500" y="775" width="6" height="6" rx="1" fill="#181818" stroke="#2d8ceb" stroke-width="1.100"/><path d="M12 778h3M13.500 776.500v3" stroke="#2d8ceb" stroke-width=".8"/>
<circle cx="26" cy="775.500" r="3.200" fill="none" stroke="#c6c6c6" stroke-width="1"/><rect x="26.500" y="776" width="5.500" height="5.500" fill="#232323" stroke="#c6c6c6" stroke-width="1"/>
<path d="M42 772.500c-1.500 0-1.500 1-1.500 2s0 2-1.500 2.200c1.500.2 1.500 1.200 1.500 2.200s0 2 1.500 2M45 772.500c1.500 0 1.500 1 1.500 2s0 2 1.500 2.200c-1.500.2-1.500 1.200-1.500 2.200s0 2-1.500 2" fill="none" stroke="#c6c6c6" stroke-width="1.100"/><rect x="42" y="773.500" width="3" height="6.500" fill="#8a8a8a"/>
</svg>
<div class="a" style="left:235.500px;top:771px;width:115px;height:12px;background:#2b2b2b;border-radius:2px;box-shadow:0 0 0 .6px #1e1e1e"></div>
<div class="t" style="left:240px;top:770.800px;color:#c8c8c8;font-size:10.400px;transform:scaleX(.915)">Toggle Switches / Modes</div>
<div class="a" style="left:562.400px;top:768.200px;width:187.600px;height:14.800px;background:#222"></div>
<svg class="a" style="left:470px;top:770.500px" width="100" height="12.500" viewBox="470 770.500 100 12.500">
<path d="M473.600 778.200l2.200-2.600 1.300 1.200 2-2.800 3.300 4.200z" fill="#c0c0c0"/>
<path d="M500.500 776.200h34" stroke="#484848" stroke-width="1.400"/>
<circle cx="496.500" cy="777.200" r="3.300" fill="#333" stroke="#b4b4b4" stroke-width="1.200"/>
<path d="M545 779.500l4.200-5 1.200 1.300-3 3.700zM548.500 779.500l5.300-6 5.200 6z" fill="#c0c0c0"/>
</svg>
</div>

<!-- ===== Layer menu ===== -->
<div class="menu" id="lm" style="left:315.100px;top:19.3px;width:204.700px;height:563.300px;border-radius:0 0 4.500px 4.500px">
<div class="mi sel" style="top:3.70px"><span class="ml">New</span><span class="ar"></span></div>
<div class="mi dis" style="top:20.38px"><span class="ml">Layer Settings...</span><span class="sc"><i class="k k21e7">⇧</i><i class="k k2318">⌘</i><i class="kl">Y</i></span></div>
<div class="sep" style="top:41.76px"></div>
<div class="mi dis" style="top:47.46px"><span class="ml">Open Layer</span></div>
<div class="mi dis" style="top:64.14px"><span class="ml">Open Layer Source</span><span class="sc"><i class="k k2325">⌥</i><i class="k k2305">⌅</i></span></div>
<div class="mi dis" style="top:80.82px"><span class="ml">Reveal in Finder</span></div>
<div class="sep" style="top:102.20px"></div>
<div class="mi dis" style="top:107.90px"><span class="ml">Mask</span><span class="ar"></span></div>
<div class="mi dis" style="top:124.58px"><span class="ml">Mask and Shape Path</span><span class="ar"></span></div>
<div class="mi dis" style="top:141.26px"><span class="ml">Quality</span><span class="ar"></span></div>
<div class="mi" style="top:157.94px"><span class="ml">Switches</span><span class="ar"></span></div>
<div class="mi dis" style="top:174.62px"><span class="ml">Transform</span><span class="ar"></span></div>
<div class="mi dis" style="top:191.30px"><span class="ml">Time</span><span class="ar"></span></div>
<div class="mi dis" style="top:207.98px"><span class="ml">Frame Blending</span><span class="ar"></span></div>
<div class="mi dis" style="top:224.66px"><span class="ml">3D Layer</span></div>
<div class="mi dis" style="top:241.34px"><span class="ml">Guide Layer</span></div>
<div class="mi dis" style="top:258.02px"><span class="ml">Environment Layer</span></div>
<div class="mi" style="top:274.70px"><span class="ml">Add Marker</span><span class="sc"><i class="k k2303">⌃</i><i class="kl">8</i></span></div>
<div class="sep" style="top:296.08px"></div>
<div class="mi dis" style="top:301.78px"><span class="ml">Preserve Transparency</span></div>
<div class="mi dis" style="top:318.46px"><span class="ml">Blending Mode</span><span class="ar"></span></div>
<div class="mi dis" style="top:335.14px"><span class="ml">Next Blending Mode</span><span class="sc"><i class="k k21e7">⇧</i><i class="kl">=</i></span></div>
<div class="mi dis" style="top:351.82px"><span class="ml">Previous Blending Mode</span><span class="sc"><i class="k k21e7">⇧</i><i class="kl">−</i></span></div>
<div class="mi dis" style="top:368.50px"><span class="ml">Track Matte</span><span class="ar"></span></div>
<div class="mi dis" style="top:385.18px"><span class="ml">Layer Styles</span><span class="ar"></span></div>
<div class="sep" style="top:406.56px"></div>
<div class="mi dis" style="top:412.26px"><span class="ml">Group Shapes</span><span class="sc"><i class="k k2318">⌘</i><i class="kl">G</i></span></div>
<div class="mi dis" style="top:428.94px"><span class="ml">Ungroup Shapes</span><span class="sc"><i class="k k21e7">⇧</i><i class="k k2318">⌘</i><i class="kl">G</i></span></div>
<div class="sep" style="top:450.32px"></div>
<div class="mi dis" style="top:456.02px"><span class="ml">Arrange</span><span class="ar"></span></div>
<div class="sep" style="top:477.40px"></div>
<div class="mi" style="top:483.10px"><span class="ml">Create</span><span class="ar"></span></div>
<div class="sep" style="top:504.48px"></div>
<div class="mi" style="top:510.18px"><span class="ml">Camera</span><span class="ar"></span></div>
<div class="mi dis" style="top:526.86px"><span class="ml">Auto-trace...</span></div>
<div class="mi dis" style="top:543.54px"><span class="ml">Pre-compose...</span><span class="sc"><i class="k k21e7">⇧</i><i class="k k2318">⌘</i><i class="kl">C</i></span></div>
</div>
<div class="menu" id="sm" style="left:520.300px;top:24px;width:196.800px;height:157.400px;border-radius:5px;background:linear-gradient(#cdcec8 0,#cacbc4 55%,#c9cabb 100%)">
<div class="mi" style="top:3.90px"><span class="ml">Text</span><span class="sc"><i class="k k2325">⌥</i><i class="k k21e7">⇧</i><i class="k k2318">⌘</i><i class="kl">T</i></span></div>
<div class="mi" style="top:20.58px"><span class="ml">Solid...</span><span class="sc"><i class="k k2318">⌘</i><i class="kl">Y</i></span></div>
<div class="mi" style="top:37.26px"><span class="ml">Light...</span><span class="sc"><i class="k k2325">⌥</i><i class="k k21e7">⇧</i><i class="k k2318">⌘</i><i class="kl">L</i></span></div>
<div class="mi" style="top:53.94px"><span class="ml">Camera...</span><span class="sc"><i class="k k2325">⌥</i><i class="k k21e7">⇧</i><i class="k k2318">⌘</i><i class="kl">C</i></span></div>
<div class="mi" style="top:70.62px"><span class="ml">Null Object</span><span class="sc"><i class="k k2325">⌥</i><i class="k k21e7">⇧</i><i class="k k2318">⌘</i><i class="kl">Y</i></span></div>
<div class="mi" style="top:87.30px"><span class="ml">Shape Layer</span></div>
<div class="mi sel" style="top:103.98px"><span class="ml">Adjustment Layer</span><span class="sc"><i class="k k2325">⌥</i><i class="k k2318">⌘</i><i class="kl">Y</i></span></div>
<div class="mi" style="top:120.66px"><span class="ml">Adobe Photoshop File...</span></div>
<div class="mi" style="top:137.34px"><span class="ml">MAXON CINEMA 4D File...</span></div>
</div>
<!-- cursor -->
<svg class="a" style="left:654.900px;top:134.500px" width="12.900" height="18.400" viewBox="0 0 14 20"><path d="M1.500 1.200v14.600l3.400-3.200 2.300 5.400 2.400-1-2.300-5.300h4.600z" fill="#111" stroke="#fff" stroke-width="1.100" stroke-linejoin="round"/></svg>
</body></html>
